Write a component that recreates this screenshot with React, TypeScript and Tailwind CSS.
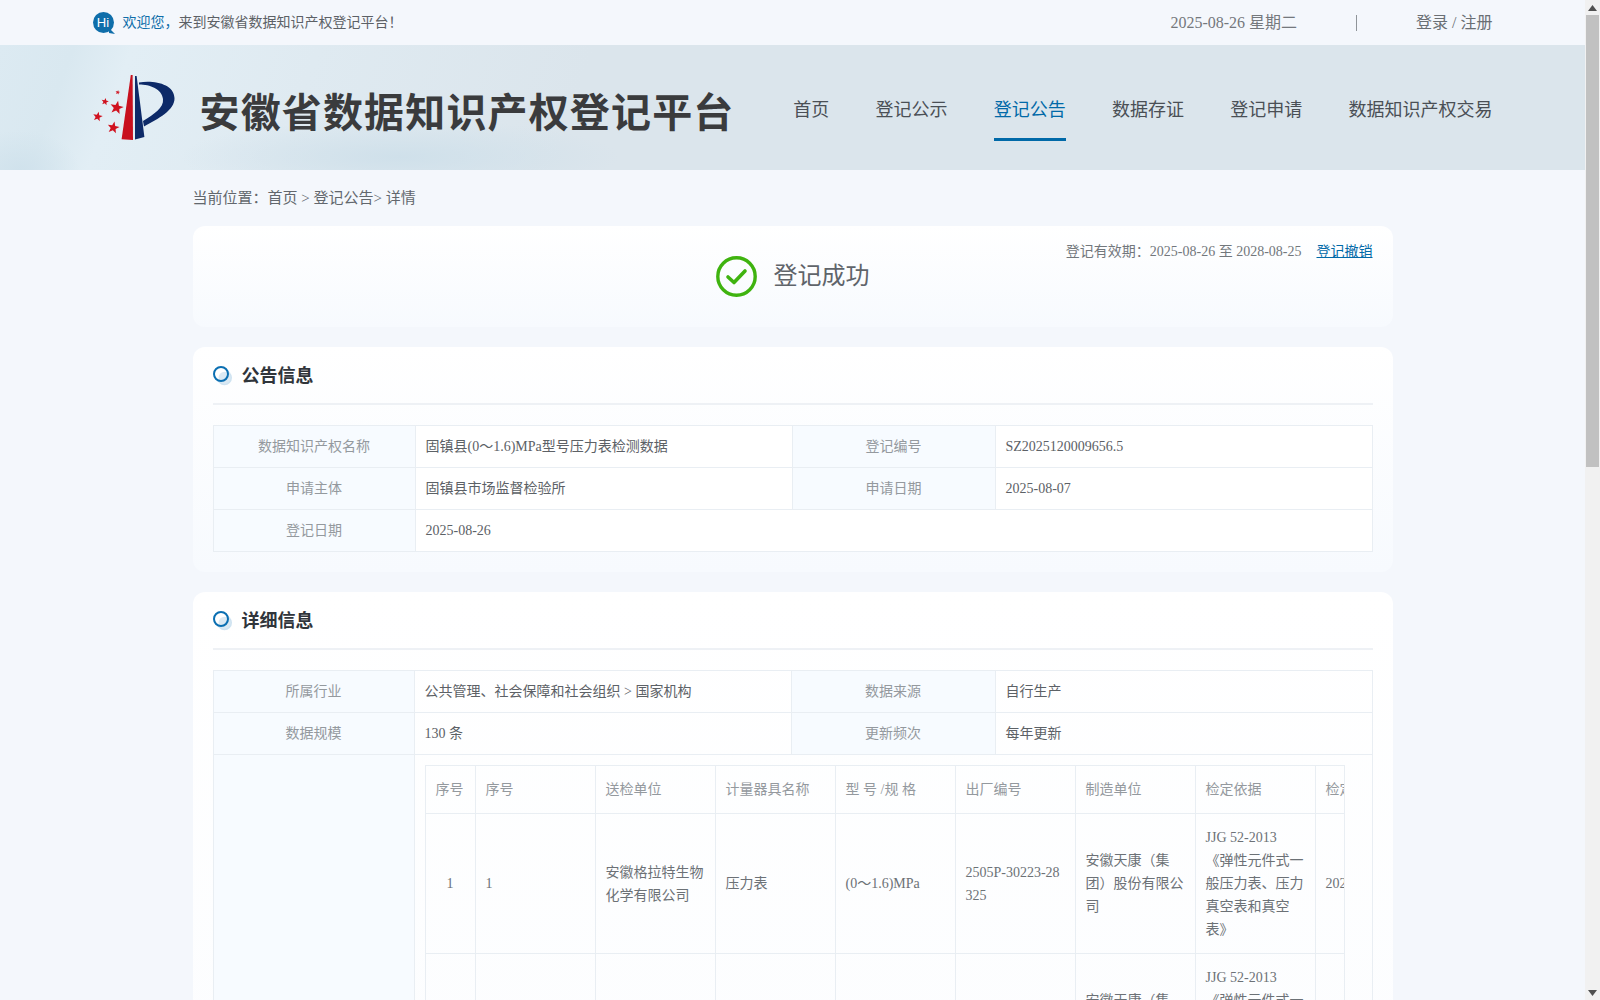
import { ReactNode } from 'react'

const NAV = ['首页', '登记公示', '登记公告', '数据存证', '登记申请', '数据知识产权交易']
const INNER_HEAD = ['序号', '序号', '送检单位', '计量器具名称', '型 号 /规 格', '出厂编号', '制造单位', '检定依据', '检定日期']

const labelCls = 'border border-[#e9eef3] bg-[#f7fbff] text-center text-[14px] font-normal text-[#94999e]'
const valueCls = 'border border-[#e9eef3] px-[10px] text-[14px] text-[#5c6166]'
const innerHeadCls = 'border border-[#e9eef3] px-[10px] text-left text-[14px] font-normal text-[#94999e]'
const innerCellCls = 'border border-[#e9eef3] px-[10px] text-[14px] leading-[23px] text-[#6c7176] break-all'

function starPoints(cx: number, cy: number, r: number) {
  const pts: string[] = []
  for (let i = 0; i < 10; i++) {
    const rad = i % 2 === 0 ? r : r * 0.42
    const a = (Math.PI / 5) * i - Math.PI / 2 + 0.2
    pts.push(`${(cx + rad * Math.cos(a)).toFixed(1)},${(cy + rad * Math.sin(a)).toFixed(1)}`)
  }
  return pts.join(' ')
}

function Logo() {
  return (
    <svg width="90" height="70" viewBox="0 0 90 70" className="shrink-0">
      <polygon points="42.8,3 44.6,3 45,68 33.6,67.3" fill="#c8101e" />
      <polygon points="47,4 48.6,4 56.4,65 47,67.4" fill="#0d2a68" />
      <path d="M51,10.5 C66,8 86,12 86.5,26 C87,38 70,47 56,54.5 L55,49 C66,42 76,36 75,27 C74,17 62,12.5 51,12.5 Z" fill="#0d2a68" />
      <polygon points={starPoints(28.7, 35.7, 7)} fill="#d0121f" />
      <polygon points={starPoints(17, 29.7, 3.8)} fill="#d0121f" />
      <polygon points={starPoints(29.7, 20.3, 2.4)} fill="#d0121f" />
      <polygon points={starPoints(9.7, 44.7, 5)} fill="#d0121f" />
      <polygon points={starPoints(25.3, 55.7, 6.2)} fill="#d0121f" />
    </svg>
  )
}

function HiBadge() {
  return (
    <div className="relative flex h-[21px] w-[21px] shrink-0 items-center justify-center rounded-full bg-[#0f6eaa] font-['Liberation_Sans',sans-serif] text-[13px] text-white">
      Hi
      <svg width="6" height="6" viewBox="0 0 6 6" className="absolute bottom-[-1px] right-[-1px]">
        <path d="M0 0 L6 6 L0 5 Z" fill="#0f6eaa" />
      </svg>
    </div>
  )
}

function CheckCircle() {
  return (
    <svg width="41" height="41" viewBox="0 0 41 41" className="shrink-0">
      <circle cx="20.5" cy="20.5" r="18.7" fill="none" stroke="#3fb30f" strokeWidth="3.4" />
      <path d="M12 21 L18 26.5 L29 15" fill="none" stroke="#3fb30f" strokeWidth="3.6" strokeLinecap="round" strokeLinejoin="round" />
    </svg>
  )
}

function Bullet() {
  return (
    <svg width="20" height="20" viewBox="0 0 20 20" className="shrink-0">
      <circle cx="11.5" cy="11.8" r="7.5" fill="#cfe3f1" />
      <circle cx="8" cy="8" r="7" fill="#ffffff" />
      <circle cx="11.5" cy="11.8" r="6" fill="#dbe9f3" />
      <circle cx="8" cy="8" r="7" fill="none" stroke="#0b6fb2" strokeWidth="2" />
    </svg>
  )
}

function SectionTitle({ children }: { children: ReactNode }) {
  return (
    <div className="flex h-[58px] items-center gap-[9px] border-b-2 border-[#eef1f5] pt-[2px]">
      <Bullet />
      <h2 className="text-[18px] font-semibold text-[#30353b]">{children}</h2>
    </div>
  )
}

function MeterRow({ no }: { no: number }) {
  return (
    <tr className="h-[140px]">
      <td className={`${innerCellCls} text-center`}>{no}</td>
      <td className={innerCellCls}>{no}</td>
      <td className={innerCellCls}>安徽格拉特生物化学有限公司</td>
      <td className={innerCellCls}>压力表</td>
      <td className={innerCellCls}>(0～1.6)MPa</td>
      <td className={innerCellCls}>2505P-30223-28325</td>
      <td className={innerCellCls}>安徽天康（集团）股份有限公司</td>
      <td className={innerCellCls}>JJG 52-2013<br />《弹性元件式一般压力表、压力真空表和真空表》</td>
      <td className={innerCellCls}>2025-08-01</td>
    </tr>
  )
}

function FakeScrollbar() {
  return (
    <div className="flex h-screen w-[15px] shrink-0 flex-col bg-[#f1f1f1]">
      <div className="flex h-[15px] items-center justify-center">
        <svg width="9" height="6" viewBox="0 0 9 6"><path d="M4.5 0 L9 6 L0 6 Z" fill="#505050" /></svg>
      </div>
      <div className="mx-[1px] h-[452px] bg-[#c1c1c1]" />
      <div className="flex-1" />
      <div className="flex h-[15px] items-center justify-center">
        <svg width="9" height="6" viewBox="0 0 9 6"><path d="M4.5 6 L9 0 L0 0 Z" fill="#505050" /></svg>
      </div>
    </div>
  )
}

export default function App() {
  return (
    <div className="flex h-screen overflow-hidden bg-[#f4f7fc] font-['Liberation_Serif','Noto_Sans_CJK_SC',serif]">
      <div className="min-w-0 flex-1 overflow-hidden">
        {/* top bar */}
        <div className="h-[45px]">
          <div className="mx-auto flex h-full w-[1400px] items-center">
            <HiBadge />
            <span className="ml-[9px] text-[14px] text-[#0f6eaa]">欢迎您，</span>
            <span className="text-[14px] text-[#5c6166]">来到安徽省数据知识产权登记平台！</span>
            <span className="ml-auto text-[16px] text-[#74787d]">2025-08-26 星期二</span>
            <span className="ml-[59px] h-4 w-px bg-[#8f9499]" />
            <span className="ml-[59px] text-[16px] text-[#6a6f74]">登录 / 注册</span>
          </div>
        </div>

        {/* header */}
        <div className="h-[125px] bg-[#dbe5ec] bg-[radial-gradient(ellipse_220px_38px_at_400px_112px,#cfe0ea_0%,#cfe0ea00_100%),radial-gradient(ellipse_60px_40px_at_20px_125px,#d0e2ec_0%,#d0e2ec00_100%),linear-gradient(110deg,#dceaf2_0px,#d9e8f0_70px,#e2eef5_125px,#dfeaf1_300px,#dbe5ec_560px)]">
          <div className="mx-auto flex h-full w-[1400px] items-center">
            <div className="mt-[-1px] ml-[-5px]">
              <Logo />
            </div>
            <div className="ml-[22px] mt-[12px] whitespace-nowrap text-[40px] font-bold tracking-[1.15px] text-[#3a3b3d]">安徽省数据知识产权登记平台</div>
            <nav className="ml-auto flex h-full gap-[46.25px]">
              {NAV.map(item => (
                <a
                  key={item}
                  className={`flex h-[96px] items-center border-b-[3px] pt-[37px] text-[18px] ${item === '登记公告' ? 'border-[#0069a8] text-[#0069a8]' : 'border-transparent text-[#4a4f55]'}`}
                >
                  {item}
                </a>
              ))}
            </nav>
          </div>
        </div>

        <div className="mx-auto w-[1200px]">
          <div className="flex h-[56px] items-center text-[15px] text-[#62676d]">
            当前位置：首页 &gt; 登记公告&gt; 详情
          </div>

          {/* status */}
          <div className="grid h-[101px] grid-cols-[1fr_auto_1fr] rounded-xl bg-gradient-to-b from-white to-[#f7fafe] px-5">
            <div />
            <div className="flex items-center gap-[17px] pb-[1px]">
              <CheckCircle />
              <span className="text-[24px] text-[#5f646a]">登记成功</span>
            </div>
            <div className="flex items-start justify-end gap-[15px] whitespace-nowrap pt-[15px] text-[14px]">
              <span className="text-[#72777c]">登记有效期：2025-08-26 至 2028-08-25</span>
              <a className="text-[#0069a8] underline">登记撤销</a>
            </div>
          </div>

          {/* notice info */}
          <div className="mt-5 rounded-xl bg-gradient-to-b from-white to-[#f7fafe] px-5 pb-5">
            <SectionTitle>公告信息</SectionTitle>
            <table className="mt-5 w-[1159px] table-fixed border-collapse">
              <colgroup>
                <col className="w-[202px]" />
                <col className="w-[377px]" />
                <col className="w-[203px]" />
                <col className="w-[377px]" />
              </colgroup>
              <tbody>
                <tr className="h-[42px]">
                  <th className={labelCls}>数据知识产权名称</th>
                  <td className={`${valueCls} bg-white`}>固镇县(0～1.6)MPa型号压力表检测数据</td>
                  <th className={labelCls}>登记编号</th>
                  <td className={`${valueCls} bg-white`}>SZ2025120009656.5</td>
                </tr>
                <tr className="h-[42px]">
                  <th className={labelCls}>申请主体</th>
                  <td className={`${valueCls} bg-white`}>固镇县市场监督检验所</td>
                  <th className={labelCls}>申请日期</th>
                  <td className={`${valueCls} bg-white`}>2025-08-07</td>
                </tr>
                <tr className="h-[42px]">
                  <th className={labelCls}>登记日期</th>
                  <td className={`${valueCls} bg-white`} colSpan={3}>2025-08-26</td>
                </tr>
              </tbody>
            </table>
          </div>

          {/* detail info */}
          <div className="mt-5 rounded-xl bg-gradient-to-b from-white to-[#f9fbfe] px-5 pb-5">
            <SectionTitle>详细信息</SectionTitle>
            <table className="mt-5 w-[1159px] table-fixed border-collapse">
              <colgroup>
                <col className="w-[201px]" />
                <col className="w-[377px]" />
                <col className="w-[204px]" />
                <col className="w-[377px]" />
              </colgroup>
              <tbody>
                <tr className="h-[42px]">
                  <th className={labelCls}>所属行业</th>
                  <td className={valueCls}>公共管理、社会保障和社会组织 &gt; 国家机构</td>
                  <th className={labelCls}>数据来源</th>
                  <td className={valueCls}>自行生产</td>
                </tr>
                <tr className="h-[42px]">
                  <th className={labelCls}>数据规模</th>
                  <td className={valueCls}>130 条</td>
                  <th className={labelCls}>更新频次</th>
                  <td className={valueCls}>每年更新</td>
                </tr>
                <tr>
                  <th className={labelCls}>数据样例</th>
                  <td className={`${valueCls} py-[10px]`} colSpan={3}>
                    <div className="w-[920px] overflow-hidden border-r border-[#e9eef3]">
                      <table className="w-[1010px] table-fixed border-collapse">
                        <colgroup>
                          <col className="w-[50px]" />
                          {INNER_HEAD.slice(1).map((_, i) => <col key={i} className="w-[120px]" />)}
                        </colgroup>
                        <thead>
                          <tr className="h-[48px]">
                            {INNER_HEAD.map((h, i) => <th key={i} className={innerHeadCls}>{h}</th>)}
                          </tr>
                        </thead>
                        <tbody>
                          {[1, 2, 3, 4, 5].map(no => <MeterRow key={no} no={no} />)}
                        </tbody>
                      </table>
                    </div>
                  </td>
                </tr>
              </tbody>
            </table>
          </div>
        </div>
      </div>
      <FakeScrollbar />
    </div>
  )
}
